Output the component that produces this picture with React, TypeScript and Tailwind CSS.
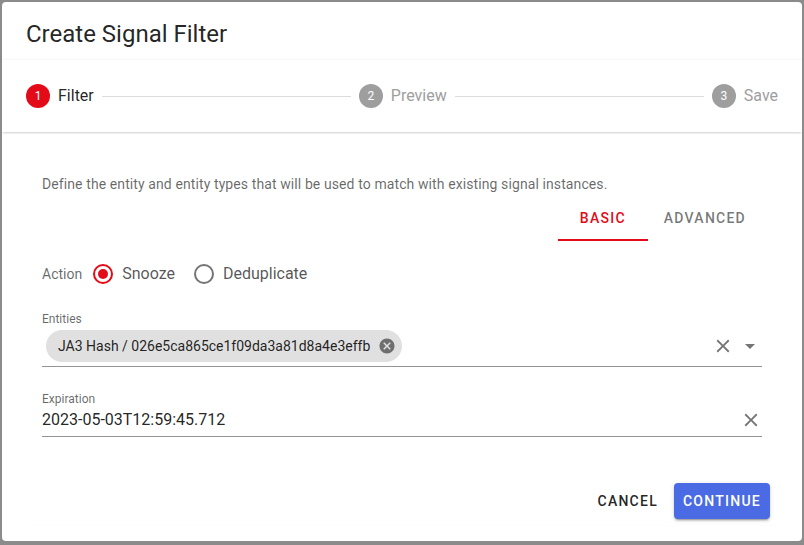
import React from "react";

const RED = "#e30b17";

const StepIcon = ({ n, active }: { n: number; active?: boolean }) => (
    <div
        className={`w-6 h-6 rounded-full flex items-center justify-center text-[12px] text-white ${
            active ? "bg-[#e30b17]" : "bg-[#9e9e9e]"
        }`}
    >
        {n}
    </div>
);

const Radio = ({ checked }: { checked?: boolean }) => (
    <span className="w-[38px] h-[38px] flex items-center justify-center">
        <svg width="24" height="24" viewBox="0 0 24 24">
            <circle cx="12" cy="12" r="9" fill="none" stroke={checked ? RED : "#757575"} strokeWidth="2" />
            {checked && <circle cx="12" cy="12" r="5" fill={RED} />}
        </svg>
    </span>
);

const CloseIcon = ({ size = 20 }: { size?: number }) => (
    <svg width={size} height={size} viewBox="0 0 24 24" fill="#757575">
        <path d="M19 6.41 17.59 5 12 10.59 6.41 5 5 6.41 10.59 12 5 17.59 6.41 19 12 13.41 17.59 19 19 17.59 13.41 12z" />
    </svg>
);

export default function App() {
    return (
        <div
            className="w-[804px] h-[545px] bg-[#8b8b8b] p-[2px] overflow-hidden"
            style={{ fontFamily: "Roboto, 'Liberation Sans', sans-serif" }}
        >
            <div className="w-[800px] h-[539px] bg-white rounded-[4px] flex flex-col overflow-hidden">
                <h2 className="px-6 pt-4 pb-[10px] text-[24px] leading-8 text-[rgba(0,0,0,0.87)] font-normal">
                    Create Signal Filter
                </h2>

                {/* stepper */}
                <div className="px-6 py-6 flex items-center shadow-[0_2px_2px_-1px_rgba(0,0,0,0.2),0_-1px_2px_rgba(0,0,0,0.04)]">
                    <div className="flex items-center gap-2">
                        <StepIcon n={1} active />
                        <span className="text-[16px] text-[rgba(0,0,0,0.87)]">Filter</span>
                    </div>
                    <div className="flex-1 mx-2 h-px bg-[#dcdcdc]" />
                    <div className="flex items-center gap-2">
                        <StepIcon n={2} />
                        <span className="text-[16px] text-[#9e9e9e]">Preview</span>
                    </div>
                    <div className="flex-1 mx-2 h-px bg-[#dcdcdc]" />
                    <div className="flex items-center gap-2">
                        <StepIcon n={3} />
                        <span className="text-[16px] text-[#9e9e9e]">Save</span>
                    </div>
                </div>

                {/* content */}
                <div className="px-6 pt-6">
                    <div className="h-[369px] px-4 pt-[18px] flex flex-col rounded-[4px] shadow-[0_1px_1px_-1px_rgba(0,0,0,0.08)]">
                        <p className="text-[14px] leading-5 tracking-[0.1px] text-[rgba(0,0,0,0.6)]">
                            Define the entity and entity types that will be used to match with existing signal instances.
                        </p>

                        <div className="flex justify-end">
                            <div className="relative h-12 min-w-[90px] px-4 flex items-center justify-center text-[14px] font-medium tracking-[1.25px] text-[#e30b17]">
                                BASIC
                                <span className="absolute left-0 right-0 bottom-[1px] h-[2px] bg-[#e30b17]" />
                            </div>
                            <div className="h-12 min-w-[90px] px-4 flex items-center justify-center text-[14px] font-medium tracking-[1.25px] text-[rgba(0,0,0,0.54)]">
                                ADVANCED
                            </div>
                        </div>

                        <div className="mt-[13px] flex items-center">
                            <span className="text-[14px] text-[rgba(0,0,0,0.6)] mr-[2px]">Action</span>
                            <Radio checked />
                            <span className="text-[16px] text-[rgba(0,0,0,0.68)] mr-[10px]">Snooze</span>
                            <Radio />
                            <span className="text-[16px] text-[rgba(0,0,0,0.68)]">Deduplicate</span>
                        </div>

                        <div className="mt-[19px] border-b border-[#949494] pb-[4px]">
                            <div className="text-[12px] leading-[14px] text-[rgba(0,0,0,0.6)]">Entities</div>
                            <div className="mt-[4px] flex items-center">
                                <div className="ml-1 h-[32px] pl-3 pr-[6px] rounded-full bg-[#e0e0e0] flex items-center gap-2">
                                    <span className="text-[14px] text-[rgba(0,0,0,0.87)]">
                                        JA3 Hash / 026e5ca865ce1f09da3a81d8a4e3effb
                                    </span>
                                    <svg width="18" height="18" viewBox="0 0 24 24" fill="#6f6f6f">
                                        <path d="M12 2C6.47 2 2 6.47 2 12s4.47 10 10 10 10-4.47 10-10S17.53 2 12 2zm5 13.59L15.59 17 12 13.41 8.41 17 7 15.59 10.59 12 7 8.41 8.41 7 12 10.59 15.59 7 17 8.41 13.41 12 17 15.59z" />
                                    </svg>
                                </div>
                                <div className="flex-1" />
                                <CloseIcon size={22} />
                                <svg width="24" height="24" viewBox="0 0 24 24" fill="#757575" className="ml-[4px]">
                                    <path d="M7 10l5 5 5-5z" />
                                </svg>
                            </div>
                        </div>

                        <div className="mt-[25px] border-b border-[#949494] pb-[4px]">
                            <div className="text-[12px] leading-[14px] text-[rgba(0,0,0,0.6)]">Expiration</div>
                            <div className="mt-[2px] flex items-center">
                                <span className="text-[16px] leading-6 text-[rgba(0,0,0,0.87)]">2023-05-03T12:59:45.712</span>
                                <div className="flex-1" />
                                <CloseIcon size={22} />
                            </div>
                        </div>

                        <div className="mt-auto mb-[6px] -mr-2 flex justify-end items-center gap-2">
                            <button className="px-2 h-9 text-[14px] font-medium tracking-[1.25px] text-[rgba(0,0,0,0.87)]">
                                CANCEL
                            </button>
                            <button className="px-[9px] h-9 rounded-[4px] bg-[#4a6be3] text-white text-[14px] font-medium tracking-[1.25px] shadow-[0_3px_1px_-2px_rgba(0,0,0,0.2),0_2px_2px_0_rgba(0,0,0,0.14),0_1px_5px_0_rgba(0,0,0,0.12)]">
                                CONTINUE
                            </button>
                        </div>
                    </div>
                </div>
            </div>
        </div>
    );
}
